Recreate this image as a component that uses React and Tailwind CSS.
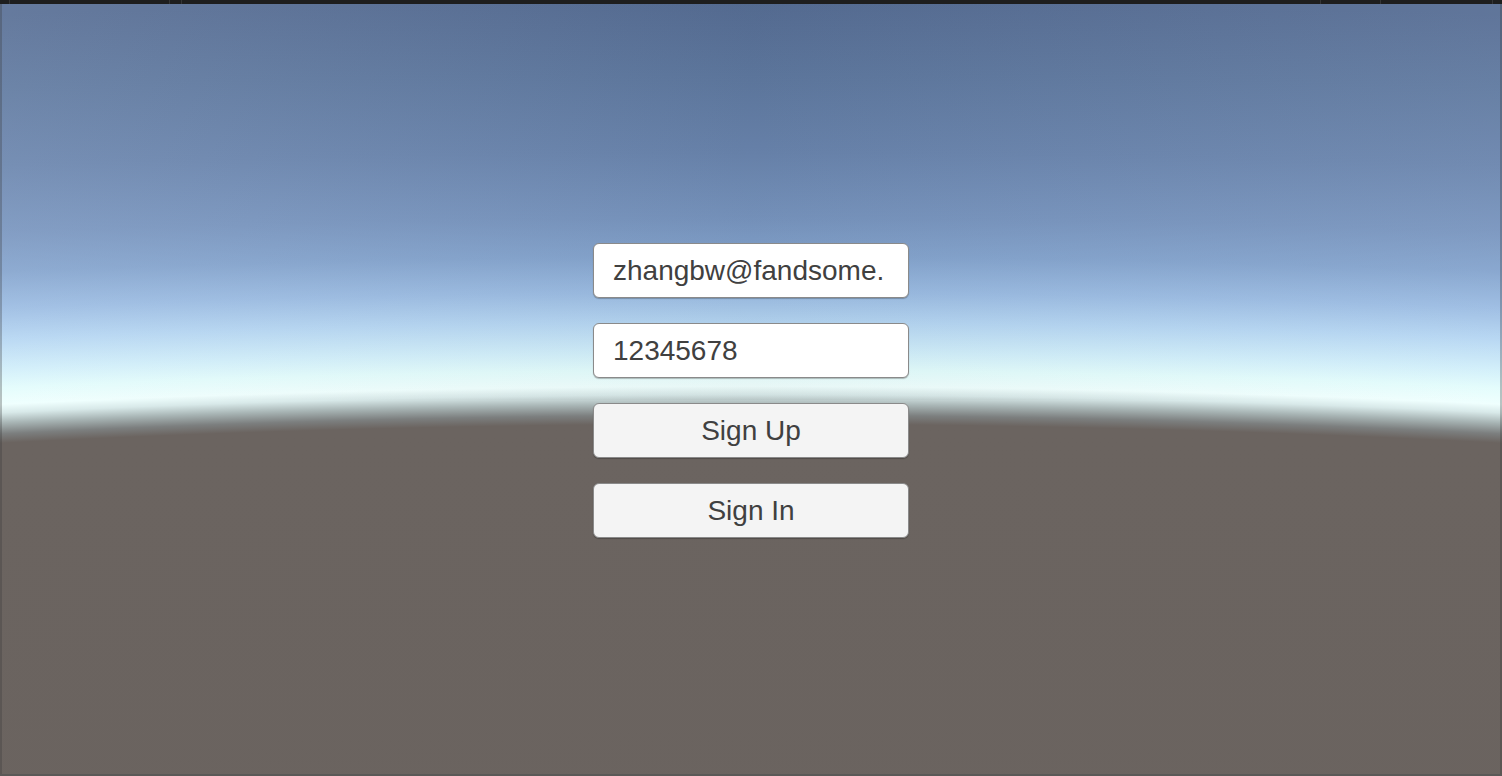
import React from 'react';

const Field = ({ children }) => (
    <div className="h-[55px] w-[316px] rounded-[6px] border border-[#8a8a8a] bg-white pl-[19px] flex items-center text-[28px] leading-none text-[#404040] shadow-[0_1px_1px_rgba(0,0,0,0.25)] overflow-hidden whitespace-nowrap">
        {children}
    </div>
);

const Button = ({ children }) => (
    <button className="h-[55px] w-[316px] rounded-[6px] border border-[#8a8a8a] bg-[#f4f4f4] flex items-center justify-center text-[28px] leading-none text-[#404040] shadow-[0_1px_1px_rgba(0,0,0,0.25)]">
        {children}
    </button>
);

export default function App() {
    return (
        <div
            className="relative h-[776px] w-full overflow-hidden font-['Liberation_Sans',Arial,sans-serif] [background:linear-gradient(to_right,rgba(255,255,255,0.09),rgba(0,0,0,0.03)_50%,rgba(255,255,255,0.06))_0_0/100%_400px_no-repeat,radial-gradient(ellipse_3000px_597px_at_50%_1018px,#6a635f_0%,#6b6460_99.5%,#7c7f7f_101%,#a9b6b6_102.8%,#d8e9e9_104.4%,#effffe_105.8%,#e2fcfc_108.5%,#d0eefa_111.5%,#b4d5f2_116.5%,#9abbe2_121.5%,#83a3cd_127.5%,#7794be_134%,#6984ad_145%,#5e789f_158%,#566d94_170%)]"
        >
            {/* editor top bar */}
            <div className="flex h-[4px] w-full bg-[#1e1e1e]">
                <div className="w-[10px] border-r border-[#353535]" />
                <div className="w-[160px] border-r border-[#353535]" />
                <div className="w-[12px] border-r border-[#353535]" />
                <div className="flex-1" />
                <div className="w-[60px] border-l border-[#353535]" />
                <div className="w-[112px] border-l border-[#353535]" />
                <div className="w-[10px] border-l border-[#353535]" />
            </div>

            {/* side and bottom edges */}
            <div className="absolute left-0 top-[4px] bottom-0 w-[2px] bg-[rgba(55,55,55,0.3)]" />
            <div className="absolute right-0 top-[4px] bottom-0 w-[2px] bg-[rgba(55,55,55,0.3)]" />
            <div className="absolute left-0 right-0 bottom-0 h-[2px] bg-[#5a5957]" />

            <div className="mx-auto mt-[239px] flex w-[316px] flex-col gap-[25px]">
                <Field>zhangbw@fandsome.</Field>
                <Field>12345678</Field>
                <Button>Sign Up</Button>
                <Button>Sign In</Button>
            </div>
        </div>
    );
}
